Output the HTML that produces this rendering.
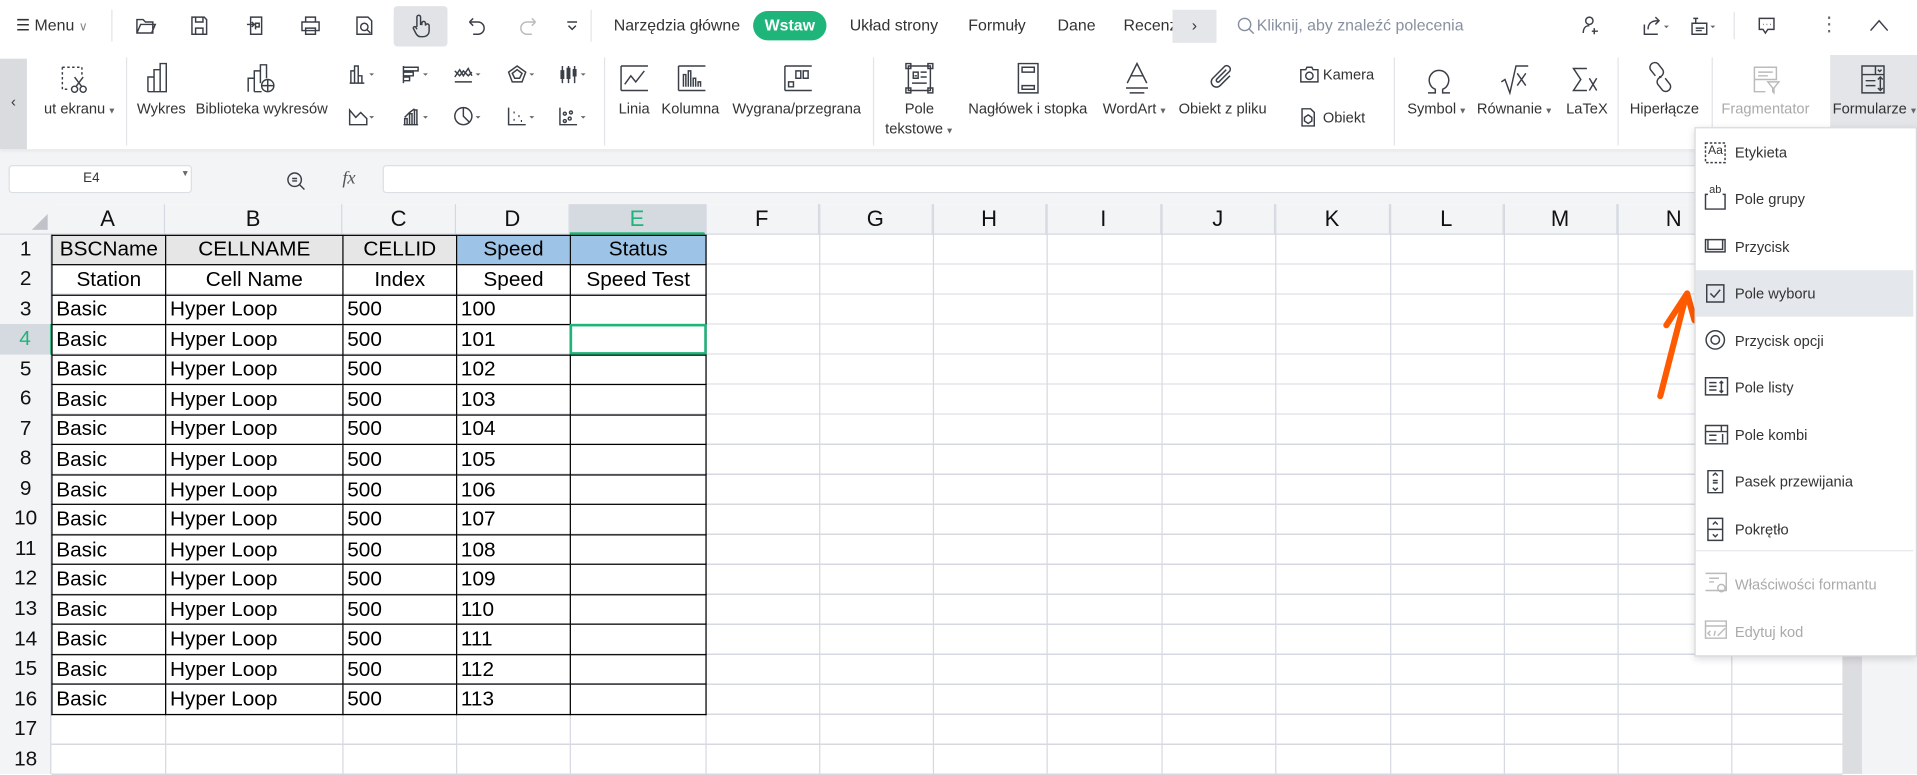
<!DOCTYPE html>
<html><head><meta charset="utf-8"><style>
html,body{margin:0;padding:0;width:1917px;height:773px;overflow:hidden;background:#fff}
#w{position:absolute;left:0;top:0;width:1568px;height:633px;transform:scale(1.22258);transform-origin:0 0;font-family:"Liberation Sans","DejaVu Sans",sans-serif;color:#333;background:#f3f4f6}
.a{position:absolute}
.t{position:absolute;font-size:12px;color:#333;white-space:nowrap}
svg{position:absolute;fill:none;stroke:#3a3f47;stroke-width:1.2}
.sep{position:absolute;width:1px;background:#e2e4e8}
.ch{position:absolute;top:167px;height:24.5px;font-size:18px;text-align:center;line-height:24px;color:#111;border-right:1px solid #d6d9e2;box-sizing:border-box}
.rh{position:absolute;left:0;width:42px;height:24.54px;font-size:17px;text-align:center;line-height:24px;color:#111}
table{position:absolute;left:42px;top:191.5px;border-collapse:collapse;table-layout:fixed;font-size:17px;color:#000}
td{border:1px solid #000;height:23.54px;padding:0 3px;line-height:22px;white-space:nowrap;overflow:hidden}
.mi{position:absolute;left:1419px;font-size:12px;color:#333}
.dr{fill:#666;stroke:none}
</style></head><body><div id="w">
<!-- top bar -->
<div class="a" style="left:0;top:0;width:1568px;height:42px;background:#fff"></div>
<div class="t" style="left:13px;top:13px;font-size:13px">☰ Menu <span style="color:#888;font-size:10px">∨</span></div>
<div class="sep" style="left:91px;top:8px;height:26px"></div>
<svg style="left:110px;top:12px" width="18" height="18"><path d="M2 4h5l2 2h6v9H2zM2 15l3-7h12l-3 7"/></svg>
<svg style="left:154px;top:12px" width="18" height="18"><path d="M3 2h10l2 2v12H3zM6 2v4h6V2M6 11h6v5H6z"/></svg>
<svg style="left:200px;top:12px" width="18" height="18"><path d="M5 2h9v14H5zM2 8h6M6 6l2 2-2 2M9 12v-5h3v3h-3"/></svg>
<svg style="left:245px;top:12px" width="18" height="18"><path d="M5 2h8v4H5zM2 6h14v7H2zM5 11h8v5H5z"/></svg>
<svg style="left:289px;top:12px" width="18" height="18"><path d="M3 2h9l3 3v11H3z"/><circle cx="9" cy="10" r="3"/><path d="M11 12l3 3"/></svg>
<div class="a" style="left:322px;top:5px;width:44px;height:33px;background:#e1e3e7;border-radius:3px"></div>
<svg style="left:335px;top:11px" width="18" height="20"><path d="M6 11V3a1.5 1.5 0 013 0v6h1V8a1.5 1.5 0 013 0v2a1.5 1.5 0 013 0v4c0 3-2 5-5 5H9c-2 0-3-1-4-3l-2-4a1.3 1.3 0 012-1l1 2"/></svg>
<svg style="left:380px;top:12px" width="18" height="18"><path d="M4 6h7a5 5 0 010 10H7M4 6l3-3M4 6l3 3"/></svg>
<svg style="left:424px;top:12px" width="18" height="18"><path d="M14 6H7a5 5 0 000 10h4M14 6l-3-3M14 6l-3 3" stroke="#bbb"/></svg>
<svg style="left:462px;top:14px" width="12" height="14"><path d="M2 4h8M3 7l3 3 3-3"/></svg>
<div class="sep" style="left:483px;top:8px;height:26px"></div>
<div class="t" style="left:502px;top:13px;font-size:13px">Narzędzia główne</div>
<div class="a" style="left:616px;top:9px;width:60px;height:24px;background:#1fb57a;border-radius:12px;color:#fff;font-weight:bold;font-size:13px;text-align:center;line-height:24px">Wstaw</div>
<div class="t" style="left:695px;top:13px;font-size:13px">Układ strony</div>
<div class="t" style="left:792px;top:13px;font-size:13px">Formuły</div>
<div class="t" style="left:865px;top:13px;font-size:13px">Dane</div>
<div class="t" style="left:919px;top:13px;font-size:13px">Recenz</div>
<div class="a" style="left:959px;top:8px;width:36px;height:27px;background:#e4e6ea;text-align:center;line-height:26px;font-size:13px">›</div>
<svg style="left:1011px;top:13px" width="16" height="16"><circle cx="7" cy="7" r="5" stroke="#8890a0"/><path d="M10.5 10.5l4 4" stroke="#8890a0"/></svg>
<div class="t" style="left:1028px;top:13px;font-size:13px;color:#8890a0">Kliknij, aby znaleźć polecenia</div>
<svg style="left:1292px;top:12px" width="18" height="18"><circle cx="8" cy="5" r="3"/><path d="M3 15c0-4 2-6 5-6M12 11v5M10 13.5h5"/></svg>
<svg style="left:1343px;top:12px" width="26" height="18"><path d="M2 8v8h11M5 12c0-5 3-7 8-7M11 2l3 3-3 3"/><path class="dr" d="M18 9h4l-2 2z"/></svg>
<svg style="left:1381px;top:12px" width="26" height="18"><path d="M4 3h4M6 3v4M3 7h12v9H3zM6 11h7M6 13h5"/><path class="dr" d="M18 9h4l-2 2z"/></svg>
<div class="sep" style="left:1418px;top:10px;height:22px"></div>
<svg style="left:1436px;top:12px" width="18" height="18"><path d="M3 3h12v9H10l-2 3-2-3H3z"/><path d="M6 8h.5M9 8h.5M12 8h.5"/></svg>
<div class="t" style="left:1488px;top:10px;font-size:16px;color:#666">⋮</div>
<svg style="left:1528px;top:14px" width="18" height="14"><path d="M2 11l7-8 7 8"/></svg>
<!-- ribbon -->
<div class="a" style="left:0;top:42px;width:1568px;height:80px;background:#fff;box-shadow:0 2px 3px rgba(0,0,0,.06)"></div>
<div class="a" style="left:0;top:48px;width:22px;height:74px;background:#d9dbdf;text-align:center;line-height:70px;font-size:12px">‹</div>
<svg style="left:48px;top:52px" width="26" height="26"><path d="M3 3h16v6M3 3v18h6" stroke-dasharray="2 2"/><circle cx="13" cy="21" r="2.5"/><circle cx="20" cy="21" r="2.5"/><path d="M14 19l6-8M19 19l-6-8"/></svg>
<div class="t" style="left:36px;top:82px">ut ekranu<span style="font-size:7px;color:#666"> ▼</span></div>
<div class="sep" style="left:103px;top:47px;height:72px"></div>
<svg style="left:118px;top:50px" width="24" height="28"><path d="M3 25V13h5v12M8 25V7h5v18M13 25V2h5v23H3"/></svg>
<div class="t" style="left:112px;top:82px">Wykres</div>
<svg style="left:200px;top:50px" width="28" height="28"><path d="M3 25V14h5v11M8 25V8h5v10M13 18V3h5v11M8 25h6"/><circle cx="19" cy="20" r="5"/><path d="M14 20h10M19 15v10"/></svg>
<div class="t" style="left:160px;top:82px">Biblioteka wykresów</div>
<!-- small chart icons -->
<svg style="left:284px;top:52px" width="26" height="18"><path d="M2 16h12M3 16V6h3v10M6 16V2h3v14M9 16v-6h3v6"/><path class="dr" d="M18 8h4l-2 2z"/></svg>
<svg style="left:328px;top:52px" width="26" height="18"><path d="M2 2v14M2 3h12v3H2M2 7h8v3H2M2 11h5v3H2"/><path class="dr" d="M18 8h4l-2 2z"/></svg>
<svg style="left:370px;top:52px" width="26" height="18"><path d="M2 15h14M2 11l4-6 3 5 4-6 3 6M2 6l4 4 3-4 4 4 3-3"/><path class="dr" d="M19 8h4l-2 2z"/></svg>
<svg style="left:414px;top:52px" width="26" height="18"><path d="M9 2l7 5-3 8H5L2 7zM9 5l4 3-2 4H7L5 8z"/><path class="dr" d="M19 8h4l-2 2z"/></svg>
<svg style="left:456px;top:52px" width="26" height="18"><path d="M4 2v14M3 6h2v6H3zM9 2v14M8 4h2v8H8zM14 2v14M13 5h2v5h-2z"/><path class="dr" d="M19 8h4l-2 2z"/></svg>
<svg style="left:284px;top:86px" width="26" height="18"><path d="M2 4l5 6 4-4 5 5v5H2zM2 4v12"/><path class="dr" d="M18 9h4l-2 2z"/></svg>
<svg style="left:328px;top:86px" width="26" height="18"><path d="M2 16h12M3 16v-5h2v5M7 16V7h2v9M11 16V4h2v12M3 10l4-4 4-3"/><path class="dr" d="M18 9h4l-2 2z"/></svg>
<svg style="left:370px;top:86px" width="26" height="18"><circle cx="9" cy="9" r="7"/><path d="M9 2v7l5 5"/><path class="dr" d="M19 9h4l-2 2z"/></svg>
<svg style="left:414px;top:86px" width="26" height="18"><path d="M2 2v14h14" /><path d="M6 6h1M10 9h1M6 12h1M12 13h1" stroke-width="1.6"/><path class="dr" d="M19 9h4l-2 2z"/></svg>
<svg style="left:456px;top:86px" width="26" height="18"><path d="M2 2v14h14"/><circle cx="6" cy="7" r="1.2"/><circle cx="11" cy="6" r="1.2"/><circle cx="10" cy="11" r="1.2"/><circle cx="6" cy="13" r="1.2"/><path class="dr" d="M19 9h4l-2 2z"/></svg>
<div class="sep" style="left:494px;top:47px;height:72px"></div>
<svg style="left:506px;top:52px" width="26" height="24"><path d="M2 2h22M2 22h22M2 2v20M5 17l5-7 4 5 7-9"/></svg>
<div class="t" style="left:506px;top:82px">Linia</div>
<svg style="left:553px;top:52px" width="26" height="24"><path d="M2 2h22M2 22h22M2 2v20M6 19V9h2v10M10 19V6h2v13M14 19v-7h2v7M18 19v-4h2v4"/></svg>
<div class="t" style="left:541px;top:82px">Kolumna</div>
<svg style="left:640px;top:52px" width="26" height="24"><path d="M2 2h22M2 22h22M2 2v20M5 15h4v4H5zM11 6h4v6h-4zM17 6h4v6h-4z"/></svg>
<div class="t" style="left:599px;top:82px">Wygrana/przegrana</div>
<div class="sep" style="left:714px;top:47px;height:72px"></div>
<svg style="left:739px;top:50px" width="26" height="28"><path d="M4 4h18v20H4zM8 9h4v5H8zM9 12h2M14 9h5M14 13h5M7 18h12"/><path d="M2 2h4v4H2zM20 2h4v4h-4zM2 22h4v4H2zM20 22h4v4h-4z"/></svg>
<div class="t" style="left:740px;top:82px">Pole</div>
<div class="t" style="left:724px;top:98px">tekstowe<span style="font-size:7px;color:#666"> ▼</span></div>
<svg style="left:830px;top:50px" width="22" height="28"><path d="M3 2h16v24H3zM6 5h10v4H6zM6 20h10v3H6z"/></svg>
<div class="t" style="left:792px;top:82px">Nagłówek i stopka</div>
<svg style="left:918px;top:50px" width="24" height="28"><path d="M4 18l8-16 8 16M7 12h10M3 22h18M6 26h12"/></svg>
<div class="t" style="left:902px;top:82px">WordArt<span style="font-size:7px;color:#666"> ▼</span></div>
<svg style="left:988px;top:50px" width="26" height="28"><path d="M18 12l-8 8a4 4 0 01-6-6L14 4a3 3 0 014 4l-9 9a1.5 1.5 0 01-2-2l8-8"/></svg>
<div class="t" style="left:964px;top:82px">Obiekt z pliku</div>
<svg style="left:1062px;top:53px" width="18" height="16"><path d="M2 4h4l1-2h4l1 2h4v10H2z"/><circle cx="9" cy="9" r="3"/></svg>
<div class="t" style="left:1082px;top:54px">Kamera</div>
<svg style="left:1062px;top:87px" width="16" height="18"><path d="M3 2h7l3 3v11H3z"/><path d="M8 7l3 2v3l-3 2-3-2V9z"/></svg>
<div class="t" style="left:1082px;top:89px">Obiekt</div>
<div class="sep" style="left:1140px;top:47px;height:72px"></div>
<svg style="left:1164px;top:52px" width="26" height="26"><path d="M4 24h6v-3A8 8 0 1116 21v3h6"/></svg>
<div class="t" style="left:1151px;top:82px">Symbol<span style="font-size:7px;color:#666"> ▼</span></div>
<svg style="left:1226px;top:52px" width="26" height="26"><path d="M2 15l3-2 4 11 5-22h10M15 8l7 10M22 8l-7 10"/></svg>
<div class="t" style="left:1208px;top:82px">Równanie<span style="font-size:7px;color:#666"> ▼</span></div>
<svg style="left:1284px;top:52px" width="26" height="26"><path d="M14 4H3l6 9-6 9h11M16 12l6 10M22 12l-6 10"/></svg>
<div class="t" style="left:1281px;top:82px">LaTeX</div>
<div class="sep" style="left:1323px;top:47px;height:72px"></div>
<svg style="left:1346px;top:50px" width="26" height="28"><path d="M8 12l-4-5a4 4 0 016-5l4 5a4 4 0 01-3 6M16 14l4 5a4 4 0 01-6 5l-4-5a4 4 0 013-6"/></svg>
<div class="t" style="left:1333px;top:82px">Hiperłącze</div>
<div class="sep" style="left:1400px;top:47px;height:72px"></div>
<svg style="left:1432px;top:52px" width="26" height="26"><path d="M3 3h18v10H3zM6 7h12M6 10h8M3 13v10h9M14 15h9l-4 5v4l-1-1v-3z" stroke="#bbb"/></svg>
<div class="t" style="left:1408px;top:82px;color:#aaa">Fragmentator</div>
<div class="a" style="left:1497px;top:45px;width:71px;height:68px;background:#e3e5e9"></div>
<svg style="left:1520px;top:52px" width="24" height="26"><path d="M3 2h18v22H3zM3 9h18M14 2v7M16 5l1.5 1.5L19 5M6 14h8M6 18h8M18 12v10M16 13l2-2 2 2M16 20l2 2 2-2"/></svg>
<div class="t" style="left:1499px;top:82px">Formularze<span style="font-size:7px;color:#666"> ▼</span></div>
<!-- formula bar -->
<div class="a" style="left:0;top:126px;width:1568px;height:38px;background:#f3f4f6"></div>
<div class="a" style="left:7px;top:135px;width:150px;height:23px;background:#fff;border:1px solid #dcdfe4;border-radius:3px;box-sizing:border-box"></div>
<div class="t" style="left:68px;top:140px;font-size:11px">E4</div>
<div class="t" style="left:148px;top:139px;font-size:7px;color:#666">▼</div>
<svg style="left:233px;top:139px" width="18" height="18"><circle cx="8" cy="8" r="5.5"/><path d="M12 12l4 4M6 7h4M6 9h4"/></svg>
<div class="t" style="left:280px;top:138px;font-size:15px;font-style:italic;font-family:'Liberation Serif',serif;color:#555">fx</div>
<div class="a" style="left:313px;top:135px;width:1255px;height:23px;background:#fff;border:1px solid #dcdfe4;border-radius:3px;box-sizing:border-box"></div>
<!-- grid -->
<div class="a" style="left:0;top:167px;width:1507px;height:466px;background:#fff"></div>
<div class="a" style="left:0;top:167px;width:42px;height:466px;background:#f3f4f6;border-right:1px solid #d6d9e2;box-sizing:border-box"></div>
<div class="a" style="left:0;top:167px;width:1507px;height:24.5px;background:#f3f4f6;border-bottom:1px solid #d6d9e2;box-sizing:border-box"></div>
<div class="a" style="left:26px;top:175px;width:0;height:0;border-left:13px solid transparent;border-bottom:13px solid #bfc3c9"></div>
<div class="a" style="left:42px;top:191.5px;width:1465px;height:442px;background:repeating-linear-gradient(to bottom,transparent 0,transparent 23.54px,#d6d9e2 23.54px,#d6d9e2 24.54px)"></div>
<div class="a" style="left:577px;top:167px;width:1px;height:466px;background:#d6d9e2"></div>
<div class="a" style="left:670px;top:167px;width:1px;height:466px;background:#d6d9e2"></div>
<div class="a" style="left:763px;top:167px;width:1px;height:466px;background:#d6d9e2"></div>
<div class="a" style="left:856px;top:167px;width:1px;height:466px;background:#d6d9e2"></div>
<div class="a" style="left:950px;top:167px;width:1px;height:466px;background:#d6d9e2"></div>
<div class="a" style="left:1043px;top:167px;width:1px;height:466px;background:#d6d9e2"></div>
<div class="a" style="left:1137px;top:167px;width:1px;height:466px;background:#d6d9e2"></div>
<div class="a" style="left:1230px;top:167px;width:1px;height:466px;background:#d6d9e2"></div>
<div class="a" style="left:1323px;top:167px;width:1px;height:466px;background:#d6d9e2"></div>
<div class="a" style="left:1416px;top:167px;width:1px;height:466px;background:#d6d9e2"></div>
<div class="a" style="left:135px;top:500px;width:1px;height:133px;background:#d6d9e2"></div>
<div class="a" style="left:280px;top:500px;width:1px;height:133px;background:#d6d9e2"></div>
<div class="a" style="left:373px;top:500px;width:1px;height:133px;background:#d6d9e2"></div>
<div class="a" style="left:466px;top:500px;width:1px;height:133px;background:#d6d9e2"></div>
<div class="ch" style="left:42px;width:93px">A</div>
<div class="ch" style="left:135px;width:145px">B</div>
<div class="ch" style="left:280px;width:93px">C</div>
<div class="ch" style="left:373px;width:93px">D</div>
<div class="ch" style="left:466px;width:111px;background:#d5d9e0;color:#1fb57a;border-bottom:2px solid #1fb57a">E</div>
<div class="ch" style="left:577px;width:93px">F</div>
<div class="ch" style="left:670px;width:93px">G</div>
<div class="ch" style="left:763px;width:93px">H</div>
<div class="ch" style="left:856px;width:94px">I</div>
<div class="ch" style="left:950px;width:93px">J</div>
<div class="ch" style="left:1043px;width:94px">K</div>
<div class="ch" style="left:1137px;width:93px">L</div>
<div class="ch" style="left:1230px;width:93px">M</div>
<div class="ch" style="left:1323px;width:93px">N</div>
<div class="rh" style="top:191.5px">1</div><div class="rh" style="top:216px">2</div><div class="rh" style="top:240.6px">3</div>
<div class="rh" style="top:265.1px;background:#d5d9e0;color:#1fb57a;border-right:2px solid #1fb57a;box-sizing:border-box;width:43px">4</div>
<div class="rh" style="top:289.7px">5</div><div class="rh" style="top:314.2px">6</div><div class="rh" style="top:338.7px">7</div><div class="rh" style="top:363.3px">8</div><div class="rh" style="top:387.8px">9</div><div class="rh" style="top:412.4px">10</div><div class="rh" style="top:436.9px">11</div><div class="rh" style="top:461.4px">12</div><div class="rh" style="top:486px">13</div><div class="rh" style="top:510.5px">14</div><div class="rh" style="top:535.1px">15</div><div class="rh" style="top:559.6px">16</div><div class="rh" style="top:584.2px">17</div><div class="rh" style="top:608.7px">18</div>
<table>
<colgroup><col style="width:93px"><col style="width:145px"><col style="width:93px"><col style="width:93px"><col style="width:111px"></colgroup>
<tr style="text-align:center"><td style="background:#e7e6e6">BSCName</td><td style="background:#e7e6e6">CELLNAME</td><td style="background:#e7e6e6">CELLID</td><td style="background:#9dc3e6">Speed</td><td style="background:#9dc3e6">Status</td></tr>
<tr style="text-align:center"><td>Station</td><td>Cell Name</td><td>Index</td><td>Speed</td><td>Speed Test</td></tr>
<tr><td>Basic</td><td>Hyper Loop</td><td>500</td><td>100</td><td></td></tr>
<tr><td>Basic</td><td>Hyper Loop</td><td>500</td><td>101</td><td></td></tr>
<tr><td>Basic</td><td>Hyper Loop</td><td>500</td><td>102</td><td></td></tr>
<tr><td>Basic</td><td>Hyper Loop</td><td>500</td><td>103</td><td></td></tr>
<tr><td>Basic</td><td>Hyper Loop</td><td>500</td><td>104</td><td></td></tr>
<tr><td>Basic</td><td>Hyper Loop</td><td>500</td><td>105</td><td></td></tr>
<tr><td>Basic</td><td>Hyper Loop</td><td>500</td><td>106</td><td></td></tr>
<tr><td>Basic</td><td>Hyper Loop</td><td>500</td><td>107</td><td></td></tr>
<tr><td>Basic</td><td>Hyper Loop</td><td>500</td><td>108</td><td></td></tr>
<tr><td>Basic</td><td>Hyper Loop</td><td>500</td><td>109</td><td></td></tr>
<tr><td>Basic</td><td>Hyper Loop</td><td>500</td><td>110</td><td></td></tr>
<tr><td>Basic</td><td>Hyper Loop</td><td>500</td><td>111</td><td></td></tr>
<tr><td>Basic</td><td>Hyper Loop</td><td>500</td><td>112</td><td></td></tr>
<tr><td>Basic</td><td>Hyper Loop</td><td>500</td><td>113</td><td></td></tr>
</table>
<div class="a" style="left:466px;top:264.6px;width:112px;height:25px;border:2px solid #1fb57a;box-sizing:border-box"></div>
<!-- scrollbar -->
<div class="a" style="left:1507px;top:167px;width:61px;height:466px;background:#f3f4f6"></div>
<div class="a" style="left:1507px;top:167px;width:16px;height:466px;background:#dcdde0"></div>
<!-- arrow -->
<svg style="left:1345px;top:232px;stroke:#ff5a00;stroke-width:5;stroke-linecap:round;stroke-linejoin:round" width="50" height="100"><path d="M13 92L34 10M18 34L35 8l6 22"/></svg>
<!-- dropdown -->
<div class="a" style="left:1386px;top:104px;width:182px;height:433px;background:#fff;border:1px solid #d6d9de;box-sizing:border-box;box-shadow:0 2px 6px rgba(0,0,0,.15)"></div>
<div class="a" style="left:1387px;top:221px;width:178px;height:38px;background:#e4e7eb"></div>
<div class="a" style="left:1387px;top:450px;width:178px;height:1px;background:#e5e7ea"></div>
<svg style="left:1394px;top:116px" width="18" height="18"><path d="M1 1h16v16H1z" stroke-dasharray="2 1.5"/></svg><div class="t" style="left:1397px;top:118px;font-size:10px">Aa</div>
<svg style="left:1394px;top:154px" width="18" height="18"><path d="M3 5H1v12h16V5h-2"/></svg><div class="t" style="left:1398px;top:150px;font-size:9px">ab</div>
<svg style="left:1394px;top:192px" width="18" height="18"><path d="M1 4h16v10H1zM3 4v8h12V4M1 14h16"/></svg>
<svg style="left:1394px;top:231px" width="18" height="18"><path d="M2 2h14v14H2zM5 9l3 3 5-6"/></svg>
<svg style="left:1394px;top:269px" width="18" height="18"><circle cx="9" cy="9" r="7.5"/><circle cx="9" cy="9" r="3.5"/></svg>
<svg style="left:1394px;top:307px" width="20" height="18"><path d="M1 2h18v14H1zM4 6h6M4 9h6M4 12h6M14 5v9M12.5 6.5L14 5l1.5 1.5M12.5 12.5L14 14l1.5-1.5"/></svg>
<svg style="left:1394px;top:346px" width="20" height="18"><path d="M1 2h18v15H1zM1 7h18M14 2v5M4 10h6M4 14h6M15 9v7"/></svg>
<svg style="left:1394px;top:384px" width="18" height="20"><path d="M3 1h12v18H3zM7 5l2-2 2 2M7 15l2 2 2-2M7 9h4M7 11h4"/></svg>
<svg style="left:1394px;top:423px" width="18" height="20"><path d="M3 1h12v18H3zM3 10h12M7 6l2-2 2 2M7 14l2 2 2-2"/></svg>
<svg style="left:1394px;top:468px" width="20" height="18"><path d="M1 1h17v14H1M4 5h8M4 8h4" stroke="#bbb"/><circle cx="14" cy="13" r="3" stroke="#bbb"/></svg>
<svg style="left:1394px;top:507px" width="20" height="18"><path d="M1 1h17v14H1zM1 5h17M5 9l-2 2 2 2M9 9l-1 4M11 13l6-6" stroke="#bbb"/></svg>
<div class="mi" style="top:118px">Etykieta</div>
<div class="mi" style="top:156px">Pole grupy</div>
<div class="mi" style="top:195px">Przycisk</div>
<div class="mi" style="top:233px">Pole wyboru</div>
<div class="mi" style="top:272px">Przycisk opcji</div>
<div class="mi" style="top:310px">Pole listy</div>
<div class="mi" style="top:349px">Pole kombi</div>
<div class="mi" style="top:387px">Pasek przewijania</div>
<div class="mi" style="top:426px">Pokrętło</div>
<div class="mi" style="top:471px;color:#aaa">Właściwości formantu</div>
<div class="mi" style="top:510px;color:#aaa">Edytuj kod</div>
</div></body></html>
